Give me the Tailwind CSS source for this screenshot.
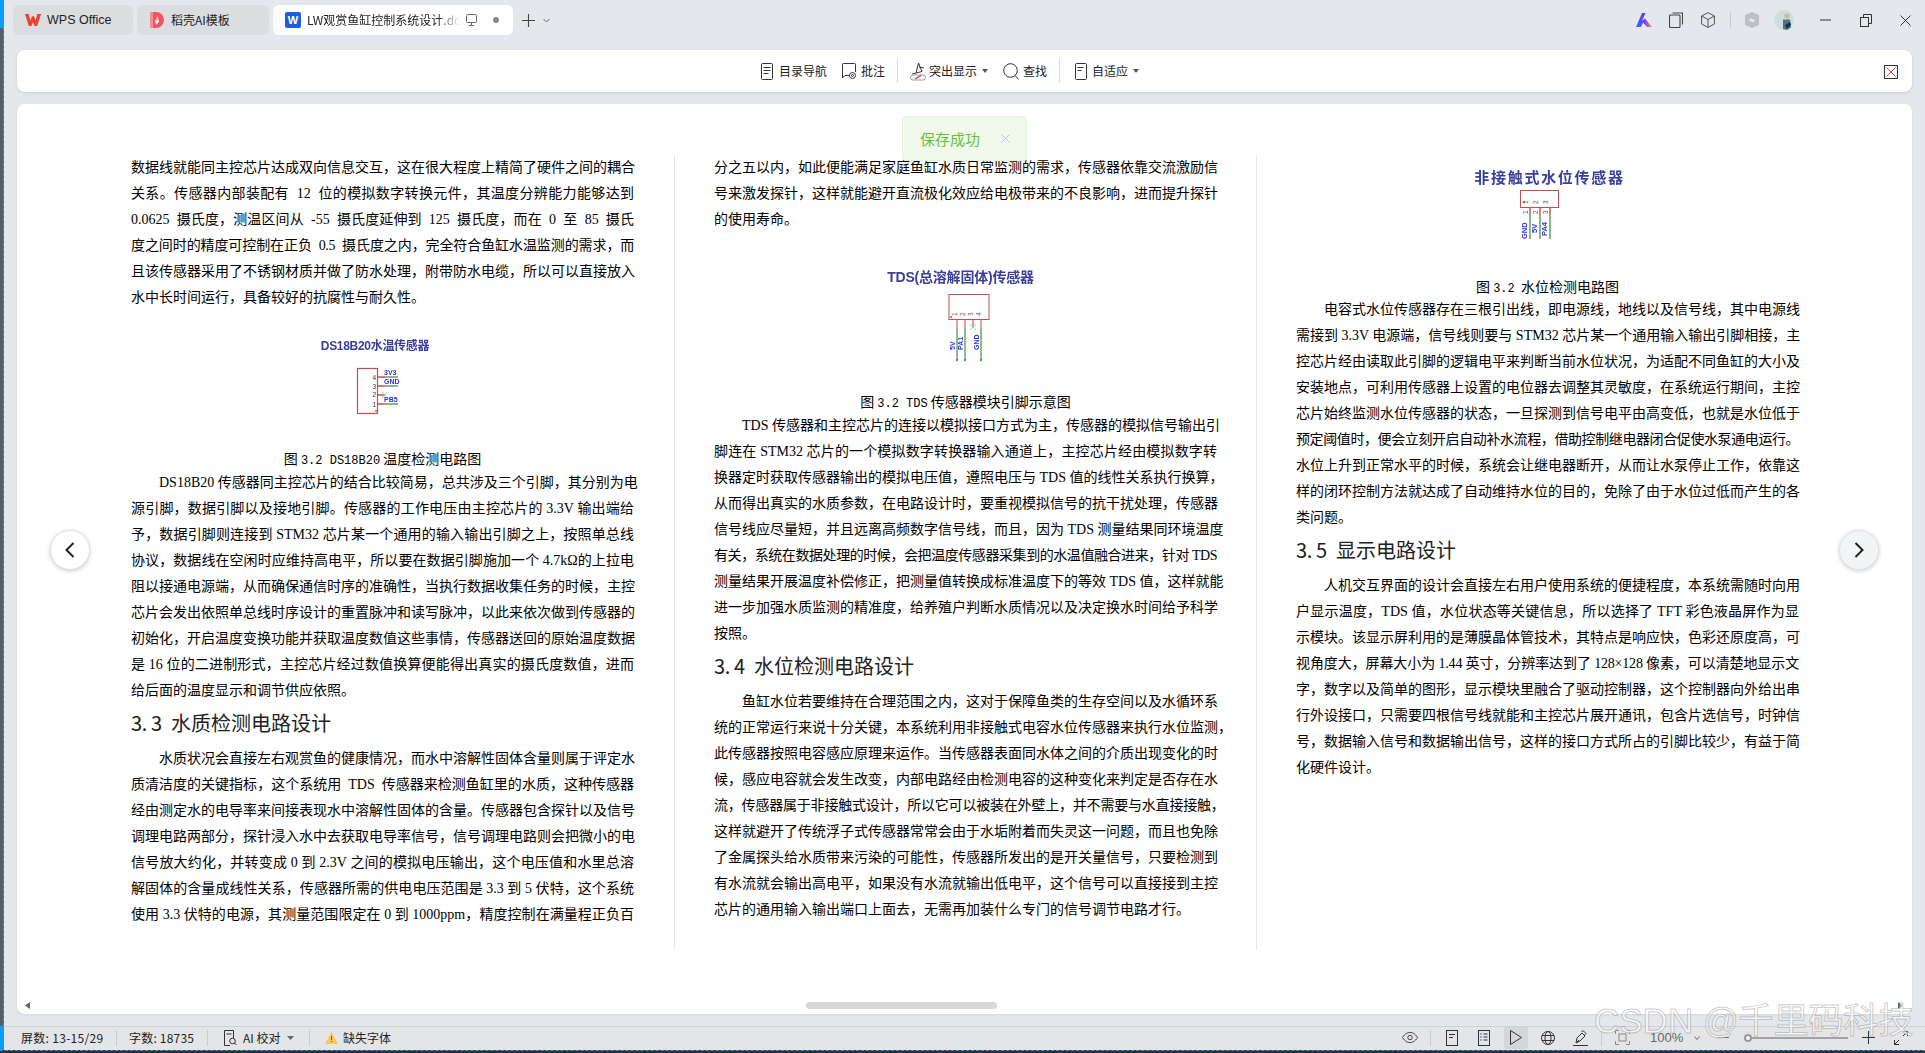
<!DOCTYPE html>
<html lang="zh-CN">
<head>
<meta charset="utf-8">
<title>WPS</title>
<script src="https://cdn.jsdelivr.net/npm/@tailwindcss/browser@4"></script>
</head>
<body class="m-0">
<div class="relative w-[1925px] h-[1053px] overflow-hidden bg-[#e4e7ec] font-['Noto_Sans_CJK_SC',sans-serif] text-[#222]">

  <!-- tab bar -->
  <div class="h-[50px] flex items-start pt-[5px] pl-[13px] pr-[14px]">
    <div class="w-[120px] h-[30px] rounded-md bg-[#dcdde1] flex items-center pl-[12px]">
      <svg width="16" height="12" viewBox="0 0 16 12"><path d="M0 0h3.600l1.800 6.400L7 2.200h2l1.600 4.200L12.400 0H16l-3.800 12H9.600L8 8 6.400 12H3.800z" fill="#f0402e"/></svg>
      <span class="ml-[6px] text-[12.500px] leading-none font-['Liberation_Sans',sans-serif]">WPS Office</span>
    </div>
    <div class="ml-[4px] w-[132px] h-[30px] rounded-md bg-[#dcdde1] flex items-center pl-[13px]">
      <svg width="14" height="16" viewBox="0 0 14 16"><path d="M0 0h6a8 8 0 0 1 0 16H0z" fill="#ee5560"/><path d="M0 0h3v16H0z" fill="#f58f8f"/><path d="M7.500 3.500c.6 2 .4 4-.6 5.500 1-.5 1.700-1.300 2-2.200.5 2-.2 4.700-3 6 .2-2-1.200-3.500-.5-5.500.2 1 .6 1.500 1 1.800.2-2 .4-3.800 1.100-5.600z" fill="#fff"/></svg>
      <span class="ml-[7px] text-[12px] leading-none">稻壳AI模板</span>
    </div>
    <div class="ml-[4px] w-[240px] h-[30px] rounded-md bg-white flex items-center pl-[12px]">
      <div class="w-[16px] h-[16px] rounded-[2px] bg-[#1d5fe0] flex items-center justify-center text-white text-[11px] font-bold leading-none font-['Liberation_Sans',sans-serif]">W</div>
      <span class="ml-[6px] w-[153px] overflow-hidden whitespace-nowrap text-[12px] leading-none [mask-image:linear-gradient(to_right,black_85%,transparent)]">LW观赏鱼缸控制系统设计.docx</span>
      <svg class="ml-[6px]" width="11" height="12" viewBox="0 0 11 12" fill="none" stroke="#666" stroke-width="1"><rect x=".5" y=".5" width="10" height="8" rx="1"/><path d="M3 11.500h5M5.500 9v2"/></svg>
      <div class="ml-[16px] w-[6px] h-[6px] rounded-full bg-[#888]"></div>
    </div>
    <div class="flex items-center h-[30px] ml-[9px]">
      <svg width="13" height="13" viewBox="0 0 13 13" stroke="#444" stroke-width="1.100"><path d="M6.500 0v13M0 6.500h13"/></svg>
      <svg class="ml-[8px]" width="7" height="5" viewBox="0 0 7 5" fill="none" stroke="#666" stroke-width="1"><path d="M.5 1l3 3 3-3"/></svg>
    </div>
    <div class="ml-auto flex items-center h-[30px]">
      <svg width="16" height="14" viewBox="0 0 16 14"><defs><linearGradient id="kg" x1="0" x2="1"><stop offset="0" stop-color="#2f6bff"/><stop offset=".5" stop-color="#6a3cf0"/><stop offset="1" stop-color="#ff8a7a"/></linearGradient></defs><path d="M0 14L6 0h3.500L6 8l3-2.500L16 14h-5L7 9.500 5 14z" fill="url(#kg)"/></svg>
      <svg class="ml-[17px]" width="14" height="16" viewBox="0 0 14 16" fill="none" stroke="#444" stroke-width="1.100"><rect x=".5" y="3" width="10.500" height="12.500" rx="1"/><path d="M3.500 1h10v11.500"/></svg>
      <svg class="ml-[18px]" width="14" height="16" viewBox="0 0 14 16" fill="none" stroke="#555" stroke-width="1"><path d="M7 .6l6.400 3.400v8L7 15.400.6 12V4zM.6 4L7 7.500 13.400 4M7 7.500v7.900"/></svg>
      <div class="ml-[15px] w-px h-[16px] bg-[#c6c9ce]"></div>
      <svg class="ml-[14px]" width="14" height="16" viewBox="0 0 14 16"><path d="M7 0l7 3v10l-7 3-7-3V3z" fill="#bcc0c7"/><path d="M4.500 6l5 1.500v3L4.500 9z" fill="#e8eaed"/></svg>
      <svg class="ml-[15px]" width="20" height="20" viewBox="0 0 20 20"><circle cx="10" cy="10" r="10" fill="#c9e0df"/><circle cx="13" cy="6" r="2.700" fill="#d9b89a"/><path d="M9 9.500h7l1 8-4 2.500-4-1z" fill="#4c7394"/><path d="M11 15l5-3 1 3-4 4z" fill="#1f3044"/></svg>
      <svg class="ml-[26px]" width="11" height="2" viewBox="0 0 11 2"><path d="M0 1h11" stroke="#333" stroke-width="1"/></svg>
      <svg class="ml-[29px]" width="12" height="13" viewBox="0 0 12 13" fill="none" stroke="#333" stroke-width="1"><rect x=".5" y="3.500" width="8" height="9"/><path d="M3.500 3.500V.5h8v9H8.500"/></svg>
      <svg class="ml-[28px]" width="11" height="11" viewBox="0 0 11 11" stroke="#333" stroke-width="1"><path d="M.5.500l10 10M10.500.500l-10 10"/></svg>
    </div>
  </div>

  <!-- toolbar -->
  <div class="ml-[17px] mr-[13px] h-[42px] rounded-lg bg-white shadow-[0_1px_3px_rgba(0,0,0,0.12)] flex items-center text-[12px] leading-none text-[#222] pl-[744px] relative">
    <svg width="12" height="17" viewBox="0 0 12 17" fill="none" stroke="#333" stroke-width="1"><rect x=".5" y=".5" width="11" height="16" rx="1"/><path d="M2.500 4.500h7M2.500 7.500h7M2.500 10.500h5"/></svg>
    <span class="ml-[6px]">目录导航</span>
    <svg class="ml-[15px]" width="14" height="16" viewBox="0 0 14 16" fill="none" stroke="#333" stroke-width="1"><path d="M8 12.500H3L.5 15V1.500a1 1 0 0 1 1-1h11a1 1 0 0 1 1 1V9"/><circle cx="10.500" cy="12.500" r="3"/><circle cx="10.500" cy="12.500" r="1"/></svg>
    <span class="ml-[5px]">批注</span>
    <div class="ml-[12px] w-px h-[24px] bg-[#d8dadd]"></div>
    <svg class="ml-[12px]" width="16" height="19" viewBox="0 0 16 19" fill="none"><path d="M6 11L8.500 1l3.500 8.500M2 12l4-1 6-1.500M9 5l5 1" stroke="#333" stroke-width="1"/><rect x=".5" y="13" width="15" height="5" rx="2.500" stroke="#999"/><path d="M5 17l6-3.500" stroke="#e0242c" stroke-width="1.200"/></svg>
    <span class="ml-[3px]">突出显示</span>
    <svg class="ml-[5px]" width="6" height="4" viewBox="0 0 6 4"><path d="M0 0h6L3 4z" fill="#555"/></svg>
    <svg class="ml-[15px]" width="16" height="17" viewBox="0 0 16 17" fill="none" stroke="#333" stroke-width="1"><circle cx="7.500" cy="7.500" r="6.800"/><path d="M12 12.500l3.500 4"/></svg>
    <span class="ml-[4px]">查找</span>
    <div class="ml-[12px] w-px h-[24px] bg-[#d8dadd]"></div>
    <svg class="ml-[15px]" width="12" height="17" viewBox="0 0 12 17" fill="none" stroke="#333" stroke-width="1"><rect x=".5" y=".5" width="11" height="16" rx="1"/><path d="M2.500 4.500h6M2.500 7.500h4"/></svg>
    <span class="ml-[5px]">自适应</span>
    <svg class="ml-[5px]" width="6" height="4" viewBox="0 0 6 4"><path d="M0 0h6L3 4z" fill="#555"/></svg>
    <div class="absolute right-[14px] top-[15px] w-[14px] h-[14px] border border-[#333] flex items-center justify-center">
      <svg width="10" height="10" viewBox="0 0 10 10" stroke="#e8323c" stroke-width="1"><path d="M.5.500l9 9M9.500.500l-9 9"/></svg>
    </div>
  </div>

  <!-- document -->
  <div class="relative mt-[12px] ml-[17px] mr-[13px] h-[910px] rounded-t-lg rounded-b-lg bg-white shadow-[0_1px_3px_rgba(0,0,0,0.08)]">
    <div class="flex pl-[114px] pt-[51px] h-[845px] text-[14px] leading-[26px] text-black whitespace-nowrap [text-align-last:justify] font-['Liberation_Serif','Noto_Sans_CJK_SC',sans-serif]">

      <!-- column 1 -->
      <div class="w-[503px] shrink-0">
        <div>
          <div>数据线就能同主控芯片达成双向信息交互，这在很大程度上精简了硬件之间的耦合</div>
          <div>关系。传感器内部装配有&nbsp; 12&nbsp; 位的模拟数字转换元件，其温度分辨能力能够达到</div>
          <div>0.0625&nbsp; 摄氏度，测温区间从&nbsp; -55&nbsp; 摄氏度延伸到&nbsp; 125&nbsp; 摄氏度，而在&nbsp; 0&nbsp; 至&nbsp; 85&nbsp; 摄氏</div>
          <div class="tracking-[-0.3px]">度之间时的精度可控制在正负&nbsp; 0.5&nbsp; 摄氏度之内，完全符合鱼缸水温监测的需求，而</div>
          <div>且该传感器采用了不锈钢材质并做了防水处理，附带防水电缆，所以可以直接放入</div>
          <div class="[text-align-last:left]">水中长时间运行，具备较好的抗腐性与耐久性。</div>
        </div>
        <div class="h-[136px] flex flex-col items-center pt-[25px] [text-align-last:left]">
          <div class="mr-[15px] h-[20px] leading-[20px] text-[12px] font-semibold tracking-[-0.3px] text-[#3a3f9c] font-['Liberation_Sans','Noto_Sans_CJK_SC',sans-serif] blur-[0.3px]">DS18B20水温传感器</div>
          <svg class="blur-[0.25px]" width="100" height="62" viewBox="0 0 100 62" font-family="Liberation Sans">
            <rect x="24.500" y="12.500" width="20" height="45" fill="#fff" stroke="#c0504d" stroke-width="1.200"/>
            <g stroke-width="1.400"><path d="M45 21h7M45 30h7M45 39h7M45 48h7" stroke="#c0504d"/><path d="M52 21h13M52 30h13M52 48h13" stroke="#5aa85a"/></g>
            <path d="M49 36l5 6M54 36l-5 6" stroke="#6fdc6f" stroke-width=".8"/>
            <g font-size="6.500" fill="#333"><text x="39.500" y="24">4</text><text x="39.500" y="33">3</text><text x="39.500" y="41">2</text><text x="39.500" y="51">1</text></g>
            <g font-size="7" fill="#2f2fee" font-weight="700"><text x="51" y="19">3V3</text><text x="51" y="28">GND</text><text x="51" y="46">PB5</text></g>
            <circle cx="43" cy="55" r="1" fill="#c0504d"/>
          </svg>
        </div>
        <div class="h-[23px] leading-[23px] text-center [text-align-last:center] font-['Noto_Sans_CJK_SC',sans-serif]">图 <span class="font-['Liberation_Mono',monospace] text-[12px]">3.2 DS18B20</span> 温度检测电路图</div>
        <div>
          <div class="pl-[28px]">DS18B20 传感器同主控芯片的结合比较简易，总共涉及三个引脚，其分别为电</div>
          <div>源引脚，数据引脚以及接地引脚。传感器的工作电压由主控芯片的 3.3V 输出端给</div>
          <div>予，数据引脚则连接到 STM32 芯片某一个通用的输入输出引脚之上，按照单总线</div>
          <div>协议，数据线在空闲时应维持高电平，所以要在数据引脚施加一个 4.7kΩ的上拉电</div>
          <div>阻以接通电源端，从而确保通信时序的准确性，当执行数据收集任务的时候，主控</div>
          <div>芯片会发出依照单总线时序设计的重置脉冲和读写脉冲，以此来依次做到传感器的</div>
          <div>初始化，开启温度变换功能并获取温度数值这些事情，传感器送回的原始温度数据</div>
          <div>是 16 位的二进制形式，主控芯片经过数值换算便能得出真实的摄氏度数值，进而</div>
          <div class="[text-align-last:left]">给后面的温度显示和调节供应依照。</div>
        </div>
        <div class="h-[42px] pb-[4px] flex items-center text-[20px] leading-none text-[#222] [text-align-last:left] font-['Noto_Sans_CJK_SC',sans-serif]"><span class="w-[40px] tracking-[-0.4px]">3. 3</span><span>水质检测电路设计</span></div>
        <div>
          <div class="pl-[28px]">水质状况会直接左右观赏鱼的健康情况，而水中溶解性固体含量则属于评定水</div>
          <div>质清洁度的关键指标，这个系统用&nbsp; TDS&nbsp; 传感器来检测鱼缸里的水质，这种传感器</div>
          <div>经由测定水的电导率来间接表现水中溶解性固体的含量。传感器包含探针以及信号</div>
          <div>调理电路两部分，探针浸入水中去获取电导率信号，信号调理电路则会把微小的电</div>
          <div>信号放大约化，并转变成 0 到 2.3V 之间的模拟电压输出，这个电压值和水里总溶</div>
          <div>解固体的含量成线性关系，传感器所需的供电电压范围是 3.3 到 5 伏特，这个系统</div>
          <div>使用 3.3 伏特的电源，其测量范围限定在 0 到 1000ppm，精度控制在满量程正负百</div>
        </div>
      </div>

      <div class="w-px h-[795px] bg-[#e4e6e9] mx-[39.500px] shrink-0"></div>

      <!-- column 2 -->
      <div class="w-[503px] shrink-0">
        <div>
          <div>分之五以内，如此便能满足家庭鱼缸水质日常监测的需求，传感器依靠交流激励信</div>
          <div>号来激发探针，这样就能避开直流极化效应给电极带来的不良影响，进而提升探针</div>
          <div class="[text-align-last:left]">的使用寿命。</div>
        </div>
        <div class="h-[157px] flex flex-col items-center pt-[34px] [text-align-last:left]">
          <div class="mr-[10px] h-[20px] leading-[20px] text-[14px] font-semibold tracking-[-0.2px] text-[#3a3f9c] font-['Liberation_Sans','Noto_Sans_CJK_SC',sans-serif] blur-[0.3px]">TDS(总溶解固体)传感器</div>
          <svg class="blur-[0.25px]" width="100" height="78" viewBox="0 0 100 78" font-family="Liberation Sans">
            <rect x="33" y="7.500" width="40" height="25" fill="#fff" stroke="#c0504d" stroke-width="1"/>
            <g stroke-width="1.500"><path d="M41 33v8M49 33v8M57 33v7M65 33v8" stroke="#d38481"/><path d="M41 41v32M49 41v32M65 41v32" stroke="#63ad63"/></g>
            <path d="M54 37l6 6M60 37l-6 6" stroke="#6fdc6f" stroke-width=".8"/>
            <g fill="#7f7f7f"><circle cx="41" cy="73" r="1.200"/><circle cx="49" cy="73" r="1.200"/><circle cx="65" cy="73" r="1.200"/></g>
            <g font-size="6.500" fill="#555"><text transform="translate(41,29) rotate(-90)">1</text><text transform="translate(49,29) rotate(-90)">2</text><text transform="translate(57,29) rotate(-90)">3</text><text transform="translate(65,29) rotate(-90)">4</text></g>
            <g font-size="7" fill="#2f2fee" font-weight="700"><text transform="translate(39,63) rotate(-90)">5V</text><text transform="translate(47,63) rotate(-90)">PA1</text><text transform="translate(63,63) rotate(-90)">GND</text></g>
            <circle cx="35" cy="30" r="1" fill="#c0504d"/>
          </svg>
        </div>
        <div class="h-[23px] leading-[23px] text-center [text-align-last:center] font-['Noto_Sans_CJK_SC',sans-serif]">图 <span class="font-['Liberation_Mono',monospace] text-[12px]">3.2 TDS</span> 传感器模块引脚示意图</div>
        <div>
          <div class="pl-[28px]">TDS 传感器和主控芯片的连接以模拟接口方式为主，传感器的模拟信号输出引</div>
          <div>脚连在 STM32 芯片的一个模拟数字转换器输入通道上，主控芯片经由模拟数字转</div>
          <div>换器定时获取传感器输出的模拟电压值，遵照电压与 TDS 值的线性关系执行换算，</div>
          <div>从而得出真实的水质参数，在电路设计时，要重视模拟信号的抗干扰处理，传感器</div>
          <div>信号线应尽量短，并且远离高频数字信号线，而且，因为 TDS 测量结果同环境温度</div>
          <div class="tracking-[-0.5px]">有关，系统在数据处理的时候，会把温度传感器采集到的水温值融合进来，针对 TDS</div>
          <div>测量结果开展温度补偿修正，把测量值转换成标准温度下的等效 TDS 值，这样就能</div>
          <div>进一步加强水质监测的精准度，给养殖户判断水质情况以及决定换水时间给予科学</div>
          <div class="[text-align-last:left]">按照。</div>
        </div>
        <div class="h-[42px] pb-[4px] flex items-center text-[20px] leading-none text-[#222] [text-align-last:left] font-['Noto_Sans_CJK_SC',sans-serif]"><span class="w-[40px] tracking-[-0.4px]">3. 4</span><span>水位检测电路设计</span></div>
        <div>
          <div class="pl-[28px]">鱼缸水位若要维持在合理范围之内，这对于保障鱼类的生存空间以及水循环系</div>
          <div>统的正常运行来说十分关键，本系统利用非接触式电容水位传感器来执行水位监测，</div>
          <div>此传感器按照电容感应原理来运作。当传感器表面同水体之间的介质出现变化的时</div>
          <div>候，感应电容就会发生改变，内部电路经由检测电容的这种变化来判定是否存在水</div>
          <div class="tracking-[-0.2px]">流，传感器属于非接触式设计，所以它可以被装在外壁上，并不需要与水直接接触，</div>
          <div>这样就避开了传统浮子式传感器常常会由于水垢附着而失灵这一问题，而且也免除</div>
          <div>了金属探头给水质带来污染的可能性，传感器所发出的是开关量信号，只要检测到</div>
          <div>有水流就会输出高电平，如果没有水流就输出低电平，这个信号可以直接接到主控</div>
          <div class="[text-align-last:left]">芯片的通用输入输出端口上面去，无需再加装什么专门的信号调节电路才行。</div>
        </div>
      </div>

      <div class="w-px h-[795px] bg-[#e4e6e9] mx-[39px] shrink-0"></div>

      <!-- column 3 -->
      <div class="w-[503px] shrink-0">
        <div class="h-[120px] flex flex-col items-center pt-[12px] [text-align-last:left]">
          <div class="ml-[4px] h-[20px] leading-[20px] text-[15px] font-semibold tracking-[1.700px] text-[#3a3f9c] font-['Noto_Sans_CJK_SC',sans-serif] blur-[0.3px]">非接触式水位传感器</div>
          <svg class="mr-[16px] blur-[0.25px]" width="100" height="56" viewBox="0 0 100 56" font-family="Liberation Sans">
            <rect x="30.500" y="3.500" width="38" height="17" fill="#fff" stroke="#c0504d" stroke-width="1"/>
            <g stroke-width="1.400"><path d="M40 21v7M50 21v7M60 21v7" stroke="#c0504d"/><path d="M40 28v24M50 28v24M60 28v24" stroke="#4fa04f"/></g>
            <g font-size="6.500" fill="#555"><text transform="translate(38,17) rotate(-90)">1</text><text transform="translate(48,17) rotate(-90)">2</text><text transform="translate(58,17) rotate(-90)">3</text><text transform="translate(38,27) rotate(-90)">1</text><text transform="translate(48,27) rotate(-90)">2</text><text transform="translate(58,27) rotate(-90)">3</text></g>
            <g font-size="7.500" fill="#2f2fee" font-weight="700"><text transform="translate(37,52) rotate(-90)">GND</text><text transform="translate(47,46) rotate(-90)">5V</text><text transform="translate(57,49) rotate(-90)">PA4</text></g>
            <circle cx="34" cy="15" r="1.200" fill="#c0504d"/>
          </svg>
        </div>
        <div class="h-[22px] leading-[22px] text-center [text-align-last:center] font-['Noto_Sans_CJK_SC',sans-serif]">图 <span class="font-['Liberation_Mono',monospace] text-[12px]">3.2</span>&nbsp; 水位检测电路图</div>
        <div>
          <div class="pl-[28px]">电容式水位传感器存在三根引出线，即电源线，地线以及信号线，其中电源线</div>
          <div>需接到 3.3V 电源端，信号线则要与 STM32 芯片某一个通用输入输出引脚相接，主</div>
          <div>控芯片经由读取此引脚的逻辑电平来判断当前水位状况，为适配不同鱼缸的大小及</div>
          <div>安装地点，可利用传感器上设置的电位器去调整其灵敏度，在系统运行期间，主控</div>
          <div>芯片始终监测水位传感器的状态，一旦探测到信号电平由高变低，也就是水位低于</div>
          <div class="tracking-[-0.4px]">预定阈值时，便会立刻开启自动补水流程，借助控制继电器闭合促使水泵通电运行。</div>
          <div>水位上升到正常水平的时候，系统会让继电器断开，从而让水泵停止工作，依靠这</div>
          <div>样的闭环控制方法就达成了自动维持水位的目的，免除了由于水位过低而产生的各</div>
          <div class="[text-align-last:left]">类问题。</div>
        </div>
        <div class="h-[42px] pb-[4px] flex items-center text-[20px] leading-none text-[#222] [text-align-last:left] font-['Noto_Sans_CJK_SC',sans-serif]"><span class="w-[40px] tracking-[-0.4px]">3. 5</span><span>显示电路设计</span></div>
        <div>
          <div class="pl-[28px]">人机交互界面的设计会直接左右用户使用系统的便捷程度，本系统需随时向用</div>
          <div>户显示温度，TDS 值，水位状态等关键信息，所以选择了 TFT 彩色液晶屏作为显</div>
          <div>示模块。该显示屏利用的是薄膜晶体管技术，其特点是响应快，色彩还原度高，可</div>
          <div class="tracking-[-0.2px]">视角度大，屏幕大小为 1.44 英寸，分辨率达到了 128×128 像素，可以清楚地显示文</div>
          <div>字，数字以及简单的图形，显示模块里融合了驱动控制器，这个控制器向外给出串</div>
          <div>行外设接口，只需要四根信号线就能和主控芯片展开通讯，包含片选信号，时钟信</div>
          <div>号，数据输入信号和数据输出信号，这样的接口方式所占的引脚比较少，有益于简</div>
          <div class="[text-align-last:left]">化硬件设计。</div>
        </div>
      </div>
    </div>

    <!-- scrollbar -->
    <div class="absolute left-[789px] top-[898px] w-[191px] h-[7px] rounded-full bg-[#d5d7da]"></div>
    <svg class="absolute left-[8px] top-[898px]" width="5" height="7" viewBox="0 0 5 7"><path d="M5 0v7L0 3.500z" fill="#666"/></svg>
    <svg class="absolute left-[1881px] top-[898px]" width="5" height="7" viewBox="0 0 5 7"><path d="M0 0v7l5-3.500z" fill="#666"/></svg>

    <!-- page arrows -->
    <div class="absolute left-[33px] top-[426px] w-[40px] h-[40px] rounded-full bg-white border border-[#e0e2e5] shadow-[0_1px_4px_rgba(0,0,0,0.2)] flex items-center justify-center">
      <svg width="10" height="16" viewBox="0 0 10 16" fill="none" stroke="#222" stroke-width="2"><path d="M8.500 1L1.500 8l7 7"/></svg>
    </div>
    <div class="absolute left-[1822px] top-[426px] w-[40px] h-[40px] rounded-full bg-[#f3f4f5] border border-[#e0e2e5] shadow-[0_1px_4px_rgba(0,0,0,0.2)] flex items-center justify-center">
      <svg width="10" height="16" viewBox="0 0 10 16" fill="none" stroke="#222" stroke-width="2"><path d="M1.500 1l7 7-7 7"/></svg>
    </div>

    <!-- toast -->
    <div class="absolute left-[885px] top-[12px] w-[125px] h-[45px] rounded bg-[#f0f9eb]/95 border border-[#e1f3d8] flex items-center pl-[17px]">
      <span class="text-[15px] leading-none text-[#67c23a]">保存成功</span>
      <svg class="ml-[21px]" width="9" height="9" viewBox="0 0 9 9" stroke="#c0c4cc" stroke-width="1"><path d="M.5.500l8 8M8.500.500l-8 8"/></svg>
    </div>
  </div>

  <!-- status bar -->
  <div class="absolute left-0 top-[1026px] w-full h-[24px] pb-[2px] border-t border-[#cfd1d4] bg-[#e4e5e7] flex items-center justify-between text-[12px] leading-none text-[#222] pl-[21px] pr-[17px]">
    <div class="flex items-center">
      <span class="w-[83px] tracking-[0.3px] whitespace-nowrap">屏数: 13-15/29</span>
      <div class="ml-[12px] w-px h-[16px] bg-[#c9cbce]"></div>
      <span class="ml-[12px] w-[66px] tracking-[0.2px] whitespace-nowrap">字数: 18735</span>
      <div class="ml-[12px] w-px h-[16px] bg-[#c9cbce]"></div>
      <svg class="ml-[16px]" width="13" height="16" viewBox="0 0 13 16" fill="none" stroke="#333" stroke-width="1"><path d="M6 15.500H.5V.5h9V8M2.500 4h5"/><circle cx="8.500" cy="11" r="2.800"/><path d="M10.500 13l2 2"/></svg>
      <span class="ml-[6px] w-[40px] whitespace-nowrap">AI 校对</span>
      <svg class="ml-[4px]" width="7" height="4" viewBox="0 0 7 4"><path d="M0 0h7L3.500 4z" fill="#666"/></svg>
      <div class="ml-[15px] w-px h-[16px] bg-[#c9cbce]"></div>
      <svg class="ml-[15px]" width="13" height="12" viewBox="0 0 13 12"><path d="M6.500 0L13 12H0z" fill="#f8c65c"/><path d="M6 4h1v4H6zM6 9h1v1H6z" fill="#8a5a00"/></svg>
      <span class="ml-[5px]">缺失字体</span>
    </div>
    <div class="flex items-center">
      <svg width="16" height="11" viewBox="0 0 16 11" fill="none" stroke="#444" stroke-width="1"><path d="M.5 5.500C3 1.500 5.500.5 8 .5s5 1 7.500 5c-2.500 4-5 5-7.500 5s-5-1-7.500-5z"/><circle cx="8" cy="5.500" r="2.200"/></svg>
      <div class="ml-[12px] w-px h-[16px] bg-[#c9cbce]"></div>
      <svg class="ml-[15px]" width="12" height="16" viewBox="0 0 12 16" fill="none" stroke="#333" stroke-width="1"><rect x=".5" y=".5" width="11" height="15"/><path d="M3 4.500h6M3 7.500h4"/></svg>
      <svg class="ml-[20px]" width="12" height="16" viewBox="0 0 12 16" fill="none" stroke-width="1"><rect x=".5" y=".5" width="11" height="15" stroke="#333"/><path d="M2 4h2M2 7h2M2 10h2" stroke="#1f7ae0"/><path d="M5.500 4h4M5.500 7h4M5.500 10h4" stroke="#333"/></svg>
      <div class="ml-[14px] w-[24px] h-[22px] rounded-[2px] bg-[#d5d6d9] flex items-center justify-center">
        <svg width="12" height="15" viewBox="0 0 12 15" fill="none" stroke="#333" stroke-width="1"><path d="M.5.500l11 7-11 7z"/></svg>
      </div>
      <svg class="ml-[13px]" width="14" height="14" viewBox="0 0 14 14" fill="none" stroke="#333" stroke-width="1"><circle cx="7" cy="7" r="6.500"/><ellipse cx="7" cy="7" rx="3" ry="6.500"/><path d="M1 4.500h12M1 9.500h12"/></svg>
      <svg class="ml-[18px]" width="15" height="16" viewBox="0 0 15 16" fill="none" stroke="#333" stroke-width="1"><path d="M0 15.500h15M3 13l1-5 5-5 3 3-5 5zM8.500 2l1.500-1.500 3 3L11.500 5M3.500 12.500L6 10"/></svg>
      <div class="ml-[13px] w-px h-[16px] bg-[#c9cbce]"></div>
      <svg class="ml-[13px]" width="15" height="15" viewBox="0 0 15 15" fill="none" stroke="#888" stroke-width="1"><path d="M.5 4V.5H4M11 .5h3.500V4M14.500 11v3.500H11M4 14.500H.5V11"/><rect x="4" y="4" width="7" height="7"/></svg>
      <span class="ml-[20px] text-[13px] text-[#666] w-[31px] font-['Liberation_Sans',sans-serif]">100%</span>
      <svg class="ml-[13px]" width="6" height="4" viewBox="0 0 6 4" fill="none" stroke="#666"><path d="M.5.500L3 3.500 5.500.500"/></svg>
      <div class="ml-[17px] w-[12px] h-[1.500px] bg-[#777]"></div>
      <div class="relative ml-[15px] w-[104px] h-[2px] bg-[#a0a2a5]">
        <div class="absolute left-0 -top-[3px] w-[8px] h-[8px] rounded-full bg-white border-2 border-[#999]"></div>
      </div>
      <svg class="ml-[14px]" width="13" height="13" viewBox="0 0 13 13" stroke="#333" stroke-width="1"><path d="M6.500 0v13M0 6.500h13"/></svg>
      <svg class="ml-[19px]" width="14" height="14" viewBox="0 0 14 14" fill="none" stroke="#333" stroke-width="1"><path d="M9 .5h4.500V5M13.500.500L9 5M5 13.500H.5V9M.5 13.500L5 9"/></svg>
    </div>
  </div>

  <!-- watermark -->
  <div class="absolute left-[1594px] top-[1000px] whitespace-nowrap text-[35px] leading-[42px] text-white/60 [-webkit-text-stroke:1px_rgba(110,110,110,0.35)] font-['Liberation_Sans','Noto_Sans_CJK_SC',sans-serif]">CSDN @千里码科技</div>

  <!-- neighbouring window edges -->
  <div class="absolute left-0 top-0 w-[4px] h-[28px] bg-[#0a9cff]"></div>
  <div class="absolute left-0 top-[28px] w-[4px] h-[998px] bg-[#555f6b] border-r border-dashed border-[#1c9cf0]"></div>
  <div class="absolute left-0 top-[1026px] w-[4px] h-[24px] bg-[#0a9cff]"></div>
  <div class="absolute left-0 top-[1050px] w-full h-[3px] bg-[#2b3037] border-t border-dashed border-[#1c9cf0]"></div>
</div>
</body>
</html>
